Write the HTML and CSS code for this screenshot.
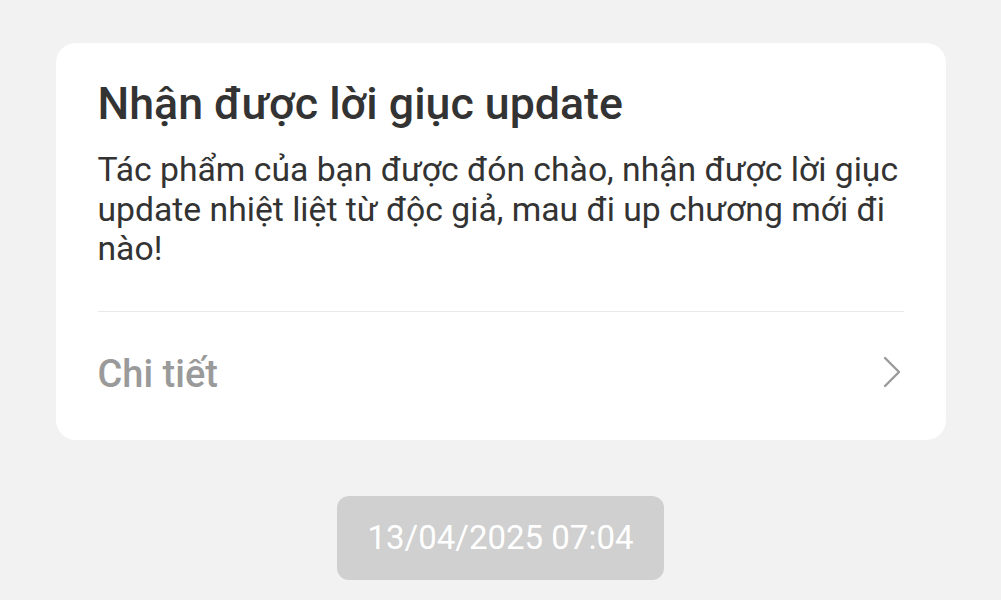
FILE: index.html
```html
<!DOCTYPE html>
<html lang="vi">
<head>
  <meta charset="UTF-8">
  <meta name="viewport" content="width=device-width, initial-scale=1.0">
  <title>Thông báo</title>
  <link rel="stylesheet" href="styles.css">
</head>
<body>
  <main class="trang">
    <section class="the">
      <h1 class="tieu-de">Nhận được lời giục update</h1>
      <p class="noi-dung">Tác phẩm của bạn được đón chào, nhận được lời giục update nhiệt liệt từ độc giả, mau đi up chương mới đi nào!</p>
      <a class="chi-tiet" href="#">
        <span>Chi tiết</span>
        <svg class="mui-ten" viewBox="0 0 20 32" width="20" height="32" aria-hidden="true">
          <path d="M3 2 L17 16 L3 30" fill="none" stroke="#9a9a9a" stroke-width="2.4" stroke-linecap="round" stroke-linejoin="round"/>
        </svg>
      </a>
    </section>

    <div class="ngay">13/04/2025 07:04</div>
  </main>
</body>
</html>
```

FILE: styles.css
```css
body {
  margin: 0;
  padding: 0;
  background-color: #f2f2f2;
  font-family: Roboto, "Noto Sans", Arial, sans-serif;
  color: #333333;
}

.trang {
  display: flex;
  flex-direction: column;
  align-items: center;
  padding-top: 43px;
}

.the {
  width: 890px;
  box-sizing: border-box;
  background-color: #ffffff;
  border-radius: 20px;
  padding: 33px 42px 0 42px;
}

.tieu-de {
  margin: 0;
  font-size: 44.7px;
  font-weight: 500;
  line-height: 56px;
  color: #333333;
}

.noi-dung {
  margin: 18px 0 0 0;
  font-size: 33.7px;
  line-height: 39.5px;
  color: #333333;
  padding-bottom: 42px;
  border-bottom: 1px solid #e8e8e8;
}

.chi-tiet {
  display: flex;
  align-items: center;
  justify-content: space-between;
  height: 128px;
  padding-bottom: 4px;
  box-sizing: border-box;
  font-size: 38px;
  font-weight: 500;
  color: #9a9a9a;
  text-decoration: none;
}

.mui-ten {
  margin-right: 2px;
  margin-bottom: 3px;
}

.ngay {
  margin-top: 56px;
  background-color: #d0d0d0;
  color: #ffffff;
  font-size: 33px;
  line-height: 84px;
  padding: 0 31px;
  border-radius: 12px;
}
```
